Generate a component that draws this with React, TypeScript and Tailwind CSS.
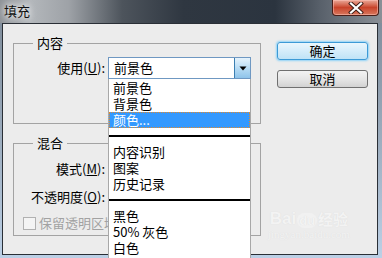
import React from "react";

const FONT = { fontFamily: '"Noto Sans CJK SC", "Liberation Sans", sans-serif' };

function Item({ children, active }: { children: React.ReactNode; active?: boolean }) {
  if (active) {
    return (
      <div className="h-[16px] bg-[#3399ff] border border-dotted border-[#e08a30] pl-[3px] text-white leading-[14px] text-[13px]">
        {children}
      </div>
    );
  }
  return <div className="h-[16px] pl-[4px] leading-[16px] text-[13px] text-black">{children}</div>;
}

function Sep() {
  return (
    <div className="h-[16px] flex items-center">
      <div className="w-full h-[1.5px] bg-black" />
    </div>
  );
}

export default function App() {
  return (
    <div
      className="relative w-[382px] h-[258px] overflow-hidden bg-gradient-to-b from-[#7b8896] via-[#9aaabb] to-[#bcd0e6] flex flex-col"
      style={FONT}
    >
      {/* title bar */}
      <div className="h-[23px] flex items-start bg-[linear-gradient(to_right,#8f9398_0%,#b3b7bb_8%,#9ea2a7_18%,#4d545c_32%,#2f3741_48%,#2b343f_72%,#59616b_84%,#8a9097_100%)]">
        <div className="pl-[4px] pt-[3px] text-[13px] leading-[16px] text-[#101010] [text-shadow:0_0_6px_#ffffff,0_0_10px_#ffffff]">
          填充
        </div>
        <div className="ml-auto mr-[3px] w-[47px] h-[16px] rounded-b-[4px] border border-t-0 border-[#4a1e18] bg-gradient-to-b from-[#e9a898] via-[#c8432a] to-[#d8765c] flex items-center justify-center shadow-[inset_0_0_0_1px_rgba(255,200,190,0.5)]">
          <svg width="16" height="12" viewBox="0 0 16 12">
            <path d="M3 1.5 L13 10.5 M13 1.5 L3 10.5" stroke="#3a1a14" strokeWidth="4" strokeLinecap="square" />
            <path d="M3 1.5 L13 10.5 M13 1.5 L3 10.5" stroke="#ffffff" strokeWidth="2.2" strokeLinecap="square" />
          </svg>
        </div>
      </div>

      {/* client panel */}
      <div className="ml-[2px] w-[376px] h-[232px] border border-[#2a2f36] bg-[#ececec] flex relative">
        {/* left column */}
        <div className="ml-[10px] w-[248px] flex flex-col">
          <fieldset className="mt-[11px] h-[89px] border border-[#a3a3a3] px-0 pb-0">
            <legend className="ml-[19px] px-[4px] text-[13px] leading-[16px] text-black">内容</legend>
            <div className="mt-[6px] flex items-center">
              <div className="w-[91px] text-right text-[13px] leading-[22px] text-black">
                使用(<span className="underline">U</span>):
              </div>
              <div className="ml-[3px] w-[143px] h-[22px] border border-[#6f98c2] bg-white flex">
                <div className="flex-1 pl-[5px] text-[13px] leading-[20px] text-black">前景色</div>
                <div className="w-[16px] h-full border-l border-[#3c7fb1] bg-gradient-to-b from-[#e6f3fc] via-[#b8dcf4] to-[#8fc4ea] flex items-center justify-center">
                  <svg width="8" height="5" viewBox="0 0 8 5">
                    <path d="M0.5 0.5 L7.5 0.5 L4 4.5 Z" fill="#000" />
                  </svg>
                </div>
              </div>
            </div>
          </fieldset>

          <fieldset className="mt-[11px] h-[101px] border border-[#a3a3a3] px-0 pb-0">
            <legend className="ml-[19px] px-[4px] text-[13px] leading-[16px] text-black">混合</legend>
            <div className="mt-[4px] h-[28px] flex items-center">
              <div className="w-[91px] text-right text-[13px] text-black">
                模式(<span className="underline">M</span>):
              </div>
            </div>
            <div className="h-[28px] flex items-center">
              <div className="w-[91px] text-right text-[13px] text-black">
                不透明度(<span className="underline">O</span>):
              </div>
            </div>
            <div className="h-[24px] flex items-center pl-[9px]">
              <div className="w-[13px] h-[13px] border border-[#b1b1b1] bg-[#f4f4f4]" />
              <div className="ml-[3px] text-[13px] text-[#a2a2a2]">保留透明区域</div>
            </div>
          </fieldset>
        </div>

        {/* right column */}
        <div className="ml-[16px] mt-[18px] flex flex-col gap-[10px]">
          <div className="w-[91px] h-[18px] rounded-[3px] border border-[#3c9ad6] bg-gradient-to-b from-[#eaf6fd] to-[#bfe3f7] shadow-[0_0_2px_1px_#8fd3f8] flex items-center justify-center text-[13px] text-black">
            确定
          </div>
          <div className="w-[91px] h-[18px] rounded-[3px] border border-[#707070] bg-gradient-to-b from-[#f3f3f3] via-[#e6e6e6] to-[#d2d2d2] flex items-center justify-center text-[13px] text-black">
            取消
          </div>
        </div>

        {/* watermark */}
        <div className="absolute left-[265px] top-[186px] flex flex-col items-center text-[#f3f3f3] [text-shadow:0_0_1px_#dadada] select-none">
          <div className="flex items-end text-[17px] leading-[18px] font-bold" style={{ fontFamily: '"Liberation Sans", sans-serif' }}>
            <span>Bai</span>
            <span className="mx-[1px] px-[2px] rounded-full bg-[#f1f1f1] text-[13px] leading-[15px]">du</span>
            <span className="text-[15px]" style={{ fontFamily: '"Noto Sans CJK SC", sans-serif' }}>经验</span>
          </div>
          <div className="text-[11px] leading-[12px]" style={{ fontFamily: '"Liberation Serif", serif' }}>
            jingyan.baidu.com
          </div>
        </div>
      </div>

      {/* dropdown list */}
      <div className="absolute left-[108px] top-[79px] w-[143px] h-[190px] bg-white border-x border-[#a8a8a8] pt-[1px]">
        <Item>前景色</Item>
        <Item>背景色</Item>
        <Item active>颜色...</Item>
        <Sep />
        <Item>内容识别</Item>
        <Item>图案</Item>
        <Item>历史记录</Item>
        <Sep />
        <Item>黑色</Item>
        <Item>50% 灰色</Item>
        <Item>白色</Item>
      </div>
    </div>
  );
}
